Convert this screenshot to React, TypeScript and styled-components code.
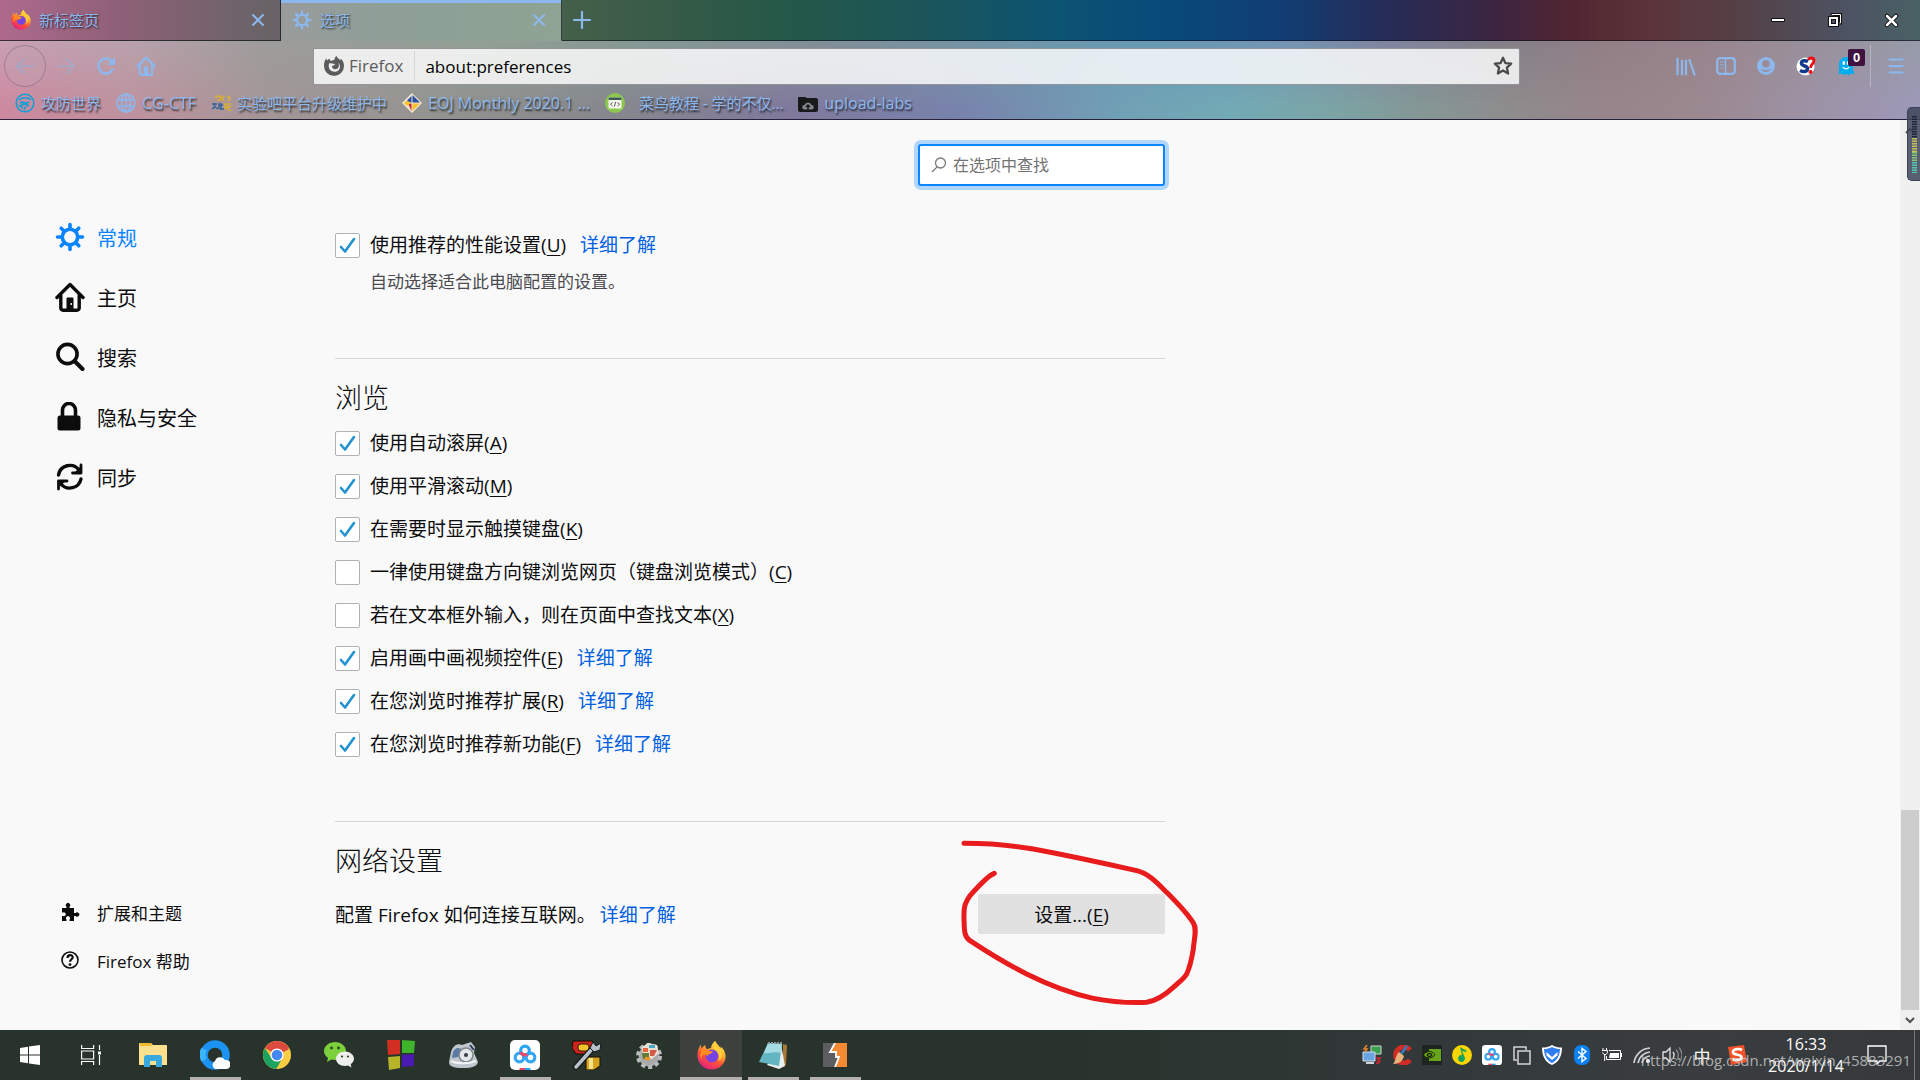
import React from 'react';
import styled, { createGlobalStyle, css } from 'styled-components';

const uiFont = '"Open Sans", "Noto Sans", "Noto Sans CJK SC", sans-serif';
const themeBlue = '#8cb8ee';

const GlobalStyle = createGlobalStyle`
  *, *::before, *::after { box-sizing: border-box; }
  body { margin: 0; background: #f9f9fa; font-family: ${uiFont}; color: #0c0c0d; }
  button, input { font: inherit; color: inherit; }
  button { border: 0; padding: 0; background: none; }
  svg { display: block; flex: none; }
  a { text-decoration: none; }
`;

const Screen = styled.div`
  display: flex;
  flex-direction: column;
  min-height: 100vh;
  position: relative;
  overflow: hidden;
`;

/* ---------- browser chrome ---------- */

const TabStrip = styled.div`
  display: flex;
  height: 41px;
  background: linear-gradient(90deg, #ae6a8e 0%, #8f6078 6%, #6c6468 13%, #55595a 20%, #46604a 29%, #335a47 36%, #245848 41%, #1b5559 48%, #0c5472 55%, #08497a 61%, #123d72 67%, #252d58 72%, #3d2540 78%, #522631 82%, #5b343a 86%, #544248 91%, #4d5262 96%, #496165 100%);
`;

const Tab = styled.div<{ $active?: boolean }>`
  display: flex;
  align-items: center;
  width: 281px;
  padding: 0 12px 0 11px;
  gap: 8px;
  font-size: 15px;
  color: ${themeBlue};
  text-shadow: 1px 1px 2px rgba(0, 0, 0, 0.75);
  border-right: 1px solid rgba(10, 20, 20, 0.7);
  border-bottom: 1px solid rgba(10, 20, 20, 0.7);
  ${p => p.$active && css`
    background: linear-gradient(90deg, #999b9b, #8d9f97 40%, #8fa393);
    border-bottom-color: transparent;
    box-shadow: inset 0 3px 0 ${themeBlue};
  `}
`;

const TabTitle = styled.span`
  flex: 1;
  line-height: 20px;
`;

const StripFill = styled.div`
  flex: 1;
  display: flex;
  justify-content: space-between;
  border-bottom: 1px solid rgba(10, 15, 30, 0.6);
`;

const IconButton = styled.button<{ $w?: number }>`
  display: grid;
  place-items: center;
  width: ${p => p.$w ?? 40}px;
  color: ${themeBlue};
`;

const WindowControls = styled.div`
  display: flex;
`;

const Toolbars = styled.div`
  position: relative;
  height: 79px;
  border-bottom: 1px solid #25213a;
  background: linear-gradient(90deg, #c9a0b4 0%, #b8a2ac 7%, #9d9c9b 14%, #93a095 25%, #879a94 33%, #828f97 43%, #6f97a9 53%, #6899b5 60%, #7494b4 67%, #8085a0 72%, #848089 78%, #917f86 83%, #98838b 88%, #99909a 94%, #979ca8 100%);
  &::before {
    content: '';
    position: absolute;
    inset: 0;
    background: linear-gradient(90deg, #cd899f 0%, #bd929e 7%, #a39696 14%, #949490 22%, #86878d 32%, #80799c 41%, #7883ac 50%, #719fb5 58%, #72aab5 64%, #7ba5a6 69%, #849795 74%, #8f8b8c 79%, #98858b 84%, #9b8991 89%, #9d93a8 95%, #9c98b8 100%);
    mask-image: linear-gradient(transparent, #000 85%);
  }
`;

const NavBar = styled.div`
  position: relative;
  display: flex;
  align-items: center;
  height: 50px;
  padding-left: 4px;
`;

const BackButton = styled.button`
  display: grid;
  place-items: center;
  width: 42px;
  height: 42px;
  border: 1px solid rgba(110, 80, 110, 0.4);
  border-radius: 50%;
  background: rgba(190, 165, 175, 0.25);
  color: #a9a4c4;
`;

const UrlBox = styled.div`
  display: flex;
  align-items: center;
  flex: 1;
  height: 37px;
  margin: 0 146px 0 147px;
  padding: 0 6px 0 10px;
  gap: 5px;
  border: 1px solid rgba(60, 60, 70, 0.5);
  border-radius: 2px;
  background: rgba(255, 255, 255, 0.82);
  font-size: 17px;
`;

const Identity = styled.span`
  padding-right: 11px;
  border-right: 1px solid #d5d5d7;
  color: #5b5b5d;
  line-height: 30px;
`;

const UrlInput = styled.input`
  flex: 1;
  min-width: 0;
  padding: 0 0 0 5px;
  border: 0;
  outline: 0;
  background: none;
  color: #000;
`;

const Extensions = styled.div`
  display: flex;
  align-items: center;
`;

const GhostWrap = styled.span`
  position: relative;
`;

const Badge = styled.span`
  position: absolute;
  left: 11px;
  top: -8px;
  width: 17px;
  height: 17px;
  border-radius: 2px;
  background: #3f1240;
  color: #fff;
  font: bold 13px/17px "Liberation Sans", sans-serif;
  text-align: center;
`;

const ToolSeparator = styled.i`
  width: 1px;
  height: 42px;
  margin-left: 4px;
  background: rgba(210, 210, 230, 0.5);
`;

const Bookmarks = styled.nav`
  position: relative;
  display: flex;
  align-items: center;
  gap: 15px;
  height: 24px;
  padding-left: 15px;
`;

const Bookmark = styled.a<{ $latin?: boolean }>`
  display: flex;
  align-items: center;
  gap: 6px;
  font-size: ${p => (p.$latin ? 16 : 15)}px;
  line-height: 24px;
  white-space: pre;
  color: ${themeBlue};
  text-shadow: 1px 2px 2px rgba(0, 0, 0, 0.75);
`;

/* ---------- preferences page ---------- */

const Page = styled.div`
  display: flex;
  flex: 1;
  background: #f9f9fa;
`;

const Sidebar = styled.aside`
  display: flex;
  flex-direction: column;
  justify-content: space-between;
  width: 335px;
  padding: 87px 0 46px 55px;
`;

const Category = styled.a<{ $selected?: boolean; $small?: boolean }>`
  display: flex;
  align-items: center;
  gap: 12px;
  height: ${p => (p.$small ? 48 : 60)}px;
  font-size: ${p => (p.$small ? 17 : 20)}px;
  color: ${p => (p.$selected ? '#0a84ff' : '#0c0c0d')};
`;

const CategoryIcon = styled.span`
  display: grid;
  place-items: center;
  width: 30px;
`;

const Main = styled.main`
  flex: 0 1 830px;
  padding-top: 24px;
  font-size: 19px;
`;

const SearchBox = styled.label`
  display: flex;
  align-items: center;
  gap: 6px;
  width: 247px;
  height: 42px;
  margin: 0 0 47px auto;
  padding: 0 11px;
  border: 2px solid #0a84ff;
  border-radius: 3px;
  background: #fff;
  box-shadow: 0 0 0 4px rgba(10, 132, 255, 0.3);
  font-size: 16px;
`;

const SearchInput = styled.input`
  flex: 1;
  min-width: 0;
  padding: 0;
  border: 0;
  outline: 0;
  background: none;
  &::placeholder { color: #737373; opacity: 1; }
`;

const Section = styled.section`
  & + & {
    margin-top: 64px;
    padding-top: 21px;
    border-top: 1px solid #d7d7db;
  }
`;

const Heading = styled.h2`
  margin: 0 0 15px;
  font-size: 27px;
  font-weight: 300;
  line-height: 36px;
`;

const OptionList = styled.div`
  display: flex;
  flex-direction: column;
  gap: 18px;
`;

const OptionRow = styled.div`
  display: flex;
  align-items: center;
  gap: 14px;
  height: 25px;
  line-height: 25px;
`;

const OptionLabel = styled.label`
  display: flex;
  align-items: center;
  gap: 10px;
  white-space: nowrap;
`;

const CheckBoxWrap = styled.span`
  display: grid;
  place-items: center;
  & > * { grid-area: 1 / 1; }
  & > svg { pointer-events: none; }
  & > input:not(:checked) + svg { visibility: hidden; }
`;

const CheckInput = styled.input`
  appearance: none;
  width: 25px;
  height: 25px;
  margin: 0;
  border: 1px solid #b1b1b1;
  border-radius: 2px;
  background: #fff;
`;

const Key = styled.span`
  text-decoration: underline;
  text-decoration-thickness: 1px;
  text-underline-offset: 3px;
`;

const LearnMore = styled.a`
  color: #0060df;
  white-space: nowrap;
`;

const Description = styled.p`
  margin: 12px 0 0 35px;
  font-size: 17px;
  line-height: 24px;
  color: #4a4a4f;
`;

const NetworkRow = styled.div`
  display: flex;
  align-items: center;
  gap: 4px;
`;

const ButtonWrap = styled.div`
  position: relative;
  margin-left: auto;
`;

const SettingsButton = styled.button`
  display: block;
  width: 187px;
  height: 40px;
  border-radius: 2px;
  background: #e1e1e2;
`;

const RedMark = styled.svg`
  position: absolute;
  left: -18px;
  top: -55px;
  pointer-events: none;
`;

const Scrollbar = styled.div`
  display: flex;
  flex-direction: column;
  width: 20px;
  margin-left: auto;
  background: #f0f0f0;
`;

const ScrollArrow = styled.button`
  display: grid;
  place-items: center;
  height: 20px;
  color: #505050;
`;

const ScrollTrack = styled.div`
  display: flex;
  flex: 1;
  align-items: flex-end;
  justify-content: center;
`;

const ScrollThumb = styled.div`
  width: 18px;
  height: 23%;
  background: #cdcdcd;
`;

const MeterWidget = styled.div`
  position: absolute;
  right: 0;
  top: 107px;
  display: flex;
  justify-content: flex-end;
  width: 13px;
  height: 74px;
  padding: 8px 3px 0 0;
  border: 1px solid #3d4156;
  border-right: 0;
  border-radius: 5px 0 0 5px;
  background: rgba(62, 68, 90, 0.85);
`;

/* ---------- taskbar ---------- */

const Taskbar = styled.footer`
  position: relative;
  display: flex;
  justify-content: space-between;
  height: 50px;
  background: linear-gradient(90deg, #28332c 0%, #28332c 55%, #33393a 75%, #3a3d40 90%, #36393b 100%);
`;

const Apps = styled.div`
  display: flex;
`;

const AppButton = styled.button<{ $state?: 'running' | 'active'; $w?: number }>`
  display: grid;
  place-items: center;
  width: ${p => p.$w ?? 62}px;
  border-top: 3px solid transparent;
  border-bottom: 3px solid transparent;
  ${p => p.$state === 'running' && css`
    background: linear-gradient(#b5b0b0, #b5b0b0) 50% 100% / 51px 3px no-repeat border-box;
  `}
  ${p => p.$state === 'active' && css`
    background: #3d423e;
    border-top-color: #3d423e;
    border-bottom-color: #b5b0b0;
  `}
`;

const Tray = styled.div`
  display: flex;
  align-items: center;
  color: #fff;
`;

const TrayIcon = styled.button<{ $w?: number }>`
  display: grid;
  place-items: center;
  width: ${p => p.$w ?? 30}px;
  height: 50px;
  font-size: 17px;
  color: #fff;
`;

const Clock = styled.div`
  width: 98px;
  font-size: 16px;
  line-height: 22px;
  text-align: center;
`;

const DesktopEdge = styled.i`
  width: 6px;
  height: 50px;
  margin-left: 15px;
  border-left: 1px solid #777;
`;

const Watermark = styled.span`
  position: absolute;
  right: 9px;
  bottom: 9px;
  font-size: 15px;
  line-height: 22px;
  color: rgba(205, 205, 205, 0.8);
  pointer-events: none;
`;

/* ---------- drawings ---------- */

const FirefoxLogo = ({ size, id }: { size: number; id: string }) => (
  <svg width={size} height={size} viewBox="0 0 32 32">
    <defs>
      <linearGradient id={id} x1="0.8" y1="0" x2="0.25" y2="1">
        <stop offset="0" stopColor="#fff44f" />
        <stop offset="0.35" stopColor="#ffb02e" />
        <stop offset="0.6" stopColor="#ff5634" />
        <stop offset="1" stopColor="#e01a86" />
      </linearGradient>
    </defs>
    <path fill={`url(#${id})`} d="M30.8 13C29.8 9.600 27.500 7.500 26 6.200c.2 1 .3 1.700.2 2.400C24.500 5 21 3.500 20.200 0c-3 1.700-4.500 5-4.700 7.600-1.500.1-3 .6-4.300 1.400C9.700 8.400 9 6.500 9.300 4.500 7.500 5.400 6 7 5.200 8.300 4.500 7.600 4.300 5.300 4.700 3.500 2.300 6 .6 10 .5 15.500.5 25 7.500 31.500 16 31.500S31.500 25 31.500 17c0-1.500-.2-2.800-.7-4z" />
    <circle cx="16.500" cy="16.500" r="7" fill="#7542e5" />
    <path fill="#ff8a1d" d="M5.500 9c3 0 5 .5 7 1.500 1.500.6 3 .5 5 1-.5 2-2.500 2.500-4 3-1 .6-2 1.500-2.200 3C11 15 9.500 14.500 8 15c-2 .7-3.500 3-3 6C3 17 3.500 12 5.500 9z" />
    <path fill="#ffcf3a" d="M20.200 0c.5 4 6 5.500 7.500 11.500 1 5-1 9-4.500 11 2-4 1.500-8-1-11-2-2.300-4.500-4-4.700-6.500.2-2 1.200-4 2.700-5z" opacity=".85" />
  </svg>
);

const Gear = ({ size }: { size: number }) => (
  <svg width={size} height={size} viewBox="0 0 30 30" fill="none" stroke="currentColor" strokeLinecap="round">
    <circle cx="15" cy="15" r="7.700" strokeWidth="3.600" />
    <g strokeWidth="3.600">
      <path d="M15 2.500V6M15 24v3.500M2.500 15H6M24 15h3.500M6.200 6.200l2.300 2.300M21.500 21.500l2.300 2.300M6.200 23.800l2.300-2.300M21.500 8.500l2.300-2.300" />
    </g>
  </svg>
);

const House = ({ size }: { size: number }) => (
  <svg width={size} height={size} viewBox="0 0 30 30" fill="none" stroke="currentColor" strokeLinecap="round" strokeLinejoin="round">
    <path d="M2 15.500 15 2.500l13 13" strokeWidth="3.400" />
    <path d="M5.800 13.500V26a2.200 2.200 0 0 0 2.200 2.200h14a2.200 2.200 0 0 0 2.200-2.200V13.500" strokeWidth="3.400" />
    <path d="M11.500 28V16.500a1 1 0 0 1 1-1h5a1 1 0 0 1 1 1V28z M15.500 21h1.400v2h-1.400z" fill="currentColor" fillRule="evenodd" stroke="none" />
  </svg>
);

const Close = () => (
  <svg width="14" height="14" viewBox="0 0 14 14" stroke="currentColor" strokeWidth="2" strokeLinecap="round"><path d="M2 2l10 10M12 2 2 12" /></svg>
);

const NetDisk = ({ size }: { size: number }) => (
  <svg width={size} height={size} viewBox="0 0 30 30">
    <rect width="30" height="30" rx="5" fill="#fff" />
    <g fill="none" strokeWidth="3.200">
      <circle cx="9.500" cy="17.500" r="4.300" stroke="#35a7f5" />
      <circle cx="20.500" cy="17.500" r="4.300" stroke="#35a7f5" />
      <circle cx="15" cy="10.500" r="4.300" stroke="#2aa4f4" />
      <path d="M10.700 12a4.300 4.300 0 0 0 6.500 2.200" stroke="#f2466a" />
    </g>
    <path d="M9.500 28h5.500v2H9.500z" fill="#f04460" /><path d="M15 28h5.500v2H15z" fill="#2aa4f4" />
  </svg>
);

const CheckMark = () => (
  <svg width="17" height="17" viewBox="0 0 17 17" fill="none" stroke="#2292d0" strokeWidth="2.600" strokeLinecap="round" strokeLinejoin="round"><path d="M2 10l4 4.500L15 2" /></svg>
);

const Check = ({ text, k, on, more }: { text: string; k: string; on?: boolean; more?: boolean }) => (
  <OptionRow>
    <OptionLabel>
      <CheckBoxWrap><CheckInput type="checkbox" defaultChecked={on} /><CheckMark /></CheckBoxWrap>
      <span>{text}(<Key>{k}</Key>)</span>
    </OptionLabel>
    {more && <LearnMore href="#">详细了解</LearnMore>}
  </OptionRow>
);

const options = [
  { text: '使用自动滚屏', k: 'A', on: true },
  { text: '使用平滑滚动', k: 'M', on: true },
  { text: '在需要时显示触摸键盘', k: 'K', on: true },
  { text: '一律使用键盘方向键浏览网页（键盘浏览模式）', k: 'C' },
  { text: '若在文本框外输入，则在页面中查找文本', k: 'X' },
  { text: '启用画中画视频控件', k: 'E', on: true, more: true },
  { text: '在您浏览时推荐扩展', k: 'R', on: true, more: true },
  { text: '在您浏览时推荐新功能', k: 'F', on: true, more: true },
];

const bookmarks: { title: string; latin?: boolean; icon: React.ReactNode }[] = [
  {
    title: '攻防世界',
    icon: <svg width="20" height="20" viewBox="0 0 20 20" fill="none" stroke="#129fd6" strokeWidth="1.600"><circle cx="10" cy="10" r="8.800" /><path d="M4 7c3-3 9-3 12 0M5 10c3-3 5 2 9-1M6 14c1-4 4-4 8-1M9 17l2-4M4 12l4 3" /></svg>,
  },
  {
    title: 'CG-CTF',
    latin: true,
    icon: <svg width="20" height="20" viewBox="0 0 20 20" fill="none" stroke={themeBlue} strokeWidth="1.500"><circle cx="10" cy="10" r="9" /><ellipse cx="10" cy="10" rx="4.500" ry="9" /><path d="M10 1v18M1.500 7h17M1.500 13h17" /></svg>,
  },
  {
    title: '实验吧平台升级维护中',
    icon: <svg width="20" height="20" viewBox="0 0 20 20" fill="none"><path d="M4 5c2-3 6-2 6 0s-3 2-3 3M13 3l-2 3 2 2M16 3l3 2-2 3" stroke="#d8ae35" strokeWidth="1.600" /><path d="M1 11h5M3.500 10v4M1 16l3-2 3 2M8 10v6M8 12h4M10 10v6M9 16h4" stroke="#34649b" strokeWidth="1.500" /><path d="M14 11h2v4h-2zM17 11h3v3h-3v3h3" stroke="#d8ae35" strokeWidth="1.400" /></svg>,
  },
  {
    title: 'EOJ Monthly 2020.1 ...',
    latin: true,
    icon: <svg width="20" height="20" viewBox="0 0 20 20"><path d="M10 0l10 10-10 10L0 10z" fill="#f2e6d2" /><path d="M10.500 2l7.500 7.500h-7.500z" fill="#2c4fa0" /><path d="M9.500 3v6.500H6.500L5 7.500z" fill="#2c4fa0" /><path d="M9.500 18v-7.500H6z" fill="#c1272d" /><path d="M2 10l3-2.500 4 2.500-4 3z" fill="#f8c22e" /><path d="M10.500 18v-7.500H18z" fill="#f8c22e" /></svg>,
  },
  {
    title: '  菜鸟教程 - 学的不仅...',
    icon: <svg width="20" height="20" viewBox="0 0 20 20"><circle cx="10" cy="10" r="10" fill="#8cc84b" /><rect x="3.500" y="4.500" width="13" height="11" fill="#f7f7f0" /><path d="M3.500 4.500h13v2.500h-13z" fill="#3c5a55" /><path d="M7.500 9.500 5.500 11.200l2 1.800M12.500 9.500l2 1.700-2 1.800M10.700 9l-1.400 4.500" fill="none" stroke="#555" /></svg>,
  },
  {
    title: 'upload-labs',
    latin: true,
    icon: <svg width="20" height="20" viewBox="0 0 20 20"><path d="M1 4h6l2 1h9a2 2 0 0 1 2 2v10a2 2 0 0 1-2 2H2a2 2 0 0 1-2-2V5a1 1 0 0 1 1-1z" fill="#17191b" /><path d="M6.500 16.500a2.300 2.300 0 0 1 0-4.600 3.700 3.700 0 0 1 7 0 2.300 2.300 0 0 1 0 4.600z" fill="#85878a" /><path d="M10 17v-4.500M8 14l2-2 2 2" stroke="#17191b" strokeWidth="1.500" fill="none" /></svg>,
  },
];

const Chrome = () => (
  <svg width="28" height="28" viewBox="0 0 28 28">
    <circle cx="14" cy="14" r="14" fill="#fccc44" />
    <path d="M14 14 1.900 7A14 14 0 0 1 26.100 7z" fill="#db4a3e" /><path d="M26.500 8H14v6z" fill="#db4a3e" />
    <path d="M14 14 8.500 17 1.900 7A14 14 0 0 0 13.200 28l6-10.500z" fill="#1da361" />
    <circle cx="14" cy="14" r="6.600" fill="#fff" /><circle cx="14" cy="14" r="5.300" fill="#4688f1" />
  </svg>
);

const apps: { name: string; w?: number; state?: 'running' | 'active'; icon: React.ReactNode }[] = [
  { name: '开始', w: 60, icon: <svg width="20" height="20" viewBox="0 0 20 20" fill="#fff"><path d="M0 3l8-1.200v7.700H0zM9 1.600 20 0v9.500H9zM0 10.500h8v7.700L0 17zM9 10.500h11V20L9 18.400z" /></svg> },
  { name: '任务视图', icon: <svg width="20" height="20" viewBox="0 0 20 20" fill="none" stroke="#fff" strokeWidth="1.200"><path d="M.6 0v3.500h12V0M.6 20v-3.500h12V20M.6 6h12v8H.6zM18.500 0v5M18.500 10v10" /><path d="M17 6.500h3v3h-3z" fill="#fff" stroke="none" /></svg> },
  { name: '资源管理器', icon: <svg width="28" height="24" viewBox="0 0 28 24"><path d="M0 1a1 1 0 0 1 1-1h11l2 2h13a1 1 0 0 1 1 1v19H0z" fill="#fbe08f" /><path d="M1 0h11l1 3H1z" fill="#f3b92d" /><path d="M5 23v-8a3 3 0 0 1 3-3h12a3 3 0 0 1 3 3v9h-6v-6h-6v6H5z" fill="#38a9de" /></svg> },
  { name: 'QQ浏览器', state: 'running', icon: <svg width="30" height="30" viewBox="0 0 30 30"><circle cx="15" cy="15" r="11" fill="none" stroke="#1c92f2" strokeWidth="7.500" /><path d="M4 9a12 12 0 0 0 0 11" stroke="#3bb6f8" strokeWidth="6" fill="none" /><path d="M15 29a4.500 4.500 0 0 1 0-8 5.500 5.500 0 0 1 10-1 4.500 4.500 0 0 1 2 9z" fill="#fff" /></svg> },
  { name: 'Chrome', icon: <Chrome /> },
  { name: '微信', icon: <svg width="30" height="26" viewBox="0 0 30 26"><path d="M11 0C5 0 0 4 0 9c0 3 1.500 5 4 6.800L3 20l4.500-2.400c1 .3 2.300.4 3.500.4 6 0 11-4 11-9S17 0 11 0z" fill="#7bd03c" /><path d="M21 9.500c-5 0-9 3.200-9 7.300s4 7.200 9 7.200c1 0 2-.1 3-.4l3.500 2-.8-3.400c2-1.300 3.300-3.200 3.300-5.400 0-4-4-7.300-9-7.300z" fill="#eee" /><g fill="#27471b"><circle cx="7.500" cy="6" r="1.400" /><circle cx="14.500" cy="6" r="1.400" /><circle cx="18" cy="14.500" r="1.100" /><circle cx="24" cy="14.500" r="1.100" /></g></svg> },
  { name: '工具箱', icon: <svg width="28" height="30" viewBox="0 0 28 30"><path d="M0 0h13v14L1 15z" fill="#d02f22" /><path d="M15 0l13 1-1 12H15z" fill="#3fb32b" /><path d="M1 17l12-1v12L2 30z" fill="#b8b42a" /><path d="M15 15l12-1v12l-12 1z" fill="#4a1bb0" /></svg> },
  { name: '看图', icon: <svg width="30" height="26" viewBox="0 0 30 26"><path d="M3 10C5 3 10 1 14 3l9-3 4 5-1 6 4 9c-1 4-5 6-15 6S1 24 1 20z" fill="#bfc6cc" /><path d="M5 10c2-5 7-5 9-2l-4 7-6 1z" fill="#5a7ba3" /><circle cx="18" cy="13" r="7" fill="#e4e7ea" stroke="#7c858e" strokeWidth="1.500" /><circle cx="18" cy="13" r="2" fill="#333b45" /><path d="M3 19c6 3 18 3 25 0" stroke="#f4f4f4" strokeWidth="2" fill="none" /><path d="M22 3l4 5" stroke="#273c5c" strokeWidth="2" /></svg> },
  { name: '百度网盘', state: 'running', icon: <NetDisk size={30} /> },
  { name: '维护', icon: <svg width="30" height="30" viewBox="0 0 30 30"><path d="M1 1h19l3 5-4 8H4L0 8z" fill="#c9251c" stroke="#1b0c08" /><rect x="6" y="4" width="11" height="7" rx="3" fill="#f4c52a" stroke="#3a1808" /><path d="M14 17h14v9l-6 4h-8z" fill="#d9a520" stroke="#1b0c08" /><path d="M17 18h4v11h-4z" fill="#f7e38e" /><path d="M4 27 21 8" stroke="#14181c" strokeWidth="6" strokeLinecap="round" /><path d="M4 27 21 8" stroke="#b6c1ca" strokeWidth="3.500" strokeLinecap="round" /><path d="M21 2l3 4 5-3-1 7-6 2-4-4z" fill="#b6c1ca" stroke="#14181c" /></svg> },
  { name: '组件', icon: <svg width="30" height="28" viewBox="0 0 30 28"><circle cx="15" cy="15" r="10.500" fill="#a7a9ab" /><circle cx="15" cy="15" r="11" fill="none" stroke="#b9bbbd" strokeWidth="4" strokeDasharray="4 3" /><path d="M8 6l6-4 9 2 2 8-7 6-9-1z" fill="#e9e2d2" /><path d="M9 7h5v4H9z" fill="#e8663a" /><path d="M15 4h6v3h-6z" fill="#4aa3c8" /><path d="M8 12h7v6H9z" fill="#637b38" /><path d="M16 9h7l-3 6h-4z" fill="#d65b44" /><path d="M11 16h5v3h-5z" fill="#f5921e" /></svg> },
  { name: 'Firefox', state: 'active', icon: <FirefoxLogo size={29} id="ffTask" /> },
  { name: '记事本', state: 'running', icon: <svg width="28" height="27" viewBox="0 0 28 27"><path d="M24 2l4 1-1 20-3 1z" fill="#a77b36" /><path d="M22 2l4 22-6 3-12-4z" fill="#e9eff0" /><path d="M9 1l14 1-3 22L0 20z" fill="#63b5c2" /><path d="M9 1l14 1-1 9C15 9 10 12 5 11z" fill="#a5dbe2" /><path d="M9 1h15" stroke="#8a9698" strokeWidth="2" strokeDasharray="2 1" /></svg> },
  { name: 'Burp Suite', state: 'running', icon: <svg width="24" height="24" viewBox="0 0 24 24"><path d="M0 0h24v24H0z" fill="#f58a32" /><path d="M0 0h12L7 9h6v5l3 1-4 9H0z" fill="#5d5c60" /><path d="M12 0 7 9h6v5h3l-4 10" fill="none" stroke="#fff" strokeWidth="1.800" /></svg> },
];

const tray: { name: string; icon: React.ReactNode }[] = [
  { name: '网络', icon: <svg width="20" height="20" viewBox="0 0 20 20"><path d="M9 1h10v8H9z" fill="#38a04b" stroke="#cdd6d0" /><path d="M1 7h12v9H1z" fill="#6aa5e2" stroke="#d5dfe9" /><path d="M4 18h8" stroke="#cfd5da" strokeWidth="2" /><path d="M5 0 2 4h3l-2 3" stroke="#e8872b" strokeWidth="1.500" fill="none" /><path d="M14 13h4l-2 2.500c3 0 2 3-2 2.500" stroke="#c92733" strokeWidth="1.700" fill="none" /></svg> },
  { name: 'CCleaner', icon: <svg width="20" height="20" viewBox="0 0 20 20"><path d="M18 5A8 8 0 1 0 18 15" fill="none" stroke="#cf2c25" strokeWidth="5" /><path d="M14 0l2 2-6 8-2-2z" fill="#3a77b7" /><path d="M7 7l5 4c-1 5-5 8-11 8 3-3 2-8 6-12z" fill="#e8b27a" /></svg> },
  { name: 'NVIDIA', icon: <svg width="20" height="20" viewBox="0 0 20 20"><path d="M0 0h20v20H0z" fill="#1e2420" /><path d="M7 4h12v12H7z" fill="#69a51c" /><path d="M1.500 10C4 6 9 5 13 9.500 11 14 4 14 1.500 10z" fill="#76b900" stroke="#16200e" /><path d="M5 10c1-2 4-2 5 0-1 2-4 2-5 0z" fill="none" stroke="#16200e" strokeWidth="1.300" /></svg> },
  { name: 'QQ音乐', icon: <svg width="20" height="20" viewBox="0 0 20 20"><circle cx="10" cy="10" r="10" fill="#fcd600" /><path d="M8 2l7 4-1 1-4-1 3 7a3.500 3.500 0 1 1-3-3z" fill="#17a35b" /></svg> },
  { name: '百度网盘', icon: <NetDisk size={20} /> },
  { name: '窗口', icon: <svg width="18" height="19" viewBox="0 0 18 19" fill="none" stroke="#d3d5d6" strokeWidth="1.500"><path d="M4 14H1V1h12v3" /><path d="M5 5h12v13H5z" /></svg> },
  { name: '电脑管家', icon: <svg width="20" height="20" viewBox="0 0 20 20"><path d="M10 0c3 2 6 2.500 10 2.500C20 11 17 17 10 20 3 17 0 11 0 2.500 4 2.500 7 2 10 0z" fill="#fff" /><path d="M10 2c3 1.500 5 2 8 2-.3 7-3 11.500-8 14-5-2.500-7.700-7-8-14 3 0 5-.5 8-2z" fill="#2d7df0" /><path d="M4.500 7 10 12l5.500-5v3.500L10 15l-5.500-4.500z" fill="#fff" /></svg> },
  { name: '蓝牙', icon: <svg width="16" height="20" viewBox="0 0 16 20"><rect width="16" height="20" rx="7" fill="#0a82f5" /><path d="M4 6.500l8 7-4 3v-13l4 3-8 7" fill="none" stroke="#fff" strokeWidth="1.400" /></svg> },
  { name: '电池', icon: <svg width="20" height="14" viewBox="0 0 20 14" fill="none" stroke="#fff"><path d="M7 2.500h11.500v9H4.500V8" /><path d="M8 5h9v5H7z" fill="#fff" stroke="none" /><path d="M19 5h1v4h-1z" fill="#fff" stroke="none" /><path d="M1 0v2M4.500 0v2M0 2.500h5.500v2l-1.500 2H2L.5 4.500M2.700 6v7" /></svg> },
  { name: '无线网络', icon: <svg width="18" height="18" viewBox="0 0 18 18" fill="none" stroke="#cfd1d2" strokeWidth="1.700"><path d="M1 17A17 17 0 0 1 17 2M5 17A13 13 0 0 1 17 6M9 17a9 9 0 0 1 8-7" /><circle cx="15" cy="15" r="2" fill="#fff" stroke="none" /></svg> },
  { name: '音量', icon: <svg width="20" height="18" viewBox="0 0 20 18" fill="none" stroke="#e5e5e5" strokeWidth="1.300"><path d="M1 6h3l4-4v14l-4-4H1z" /><path d="M11 6c1.500 2 1.500 4 0 6" /><path d="M14 3.500c3 3.500 3 7.500 0 11M17 1.500c4 4.500 4 10.500 0 15" opacity=".45" /></svg> },
  { name: '输入法', icon: <span>中</span> },
];

export default function App() {
  return (
    <Screen>
      <GlobalStyle />
      <header>
        <TabStrip>
          <Tab>
            <FirefoxLogo size={20} id="ffTab" />
            <TabTitle>新标签页</TabTitle>
            <IconButton $w={20} aria-label="关闭标签页"><Close /></IconButton>
          </Tab>
          <Tab $active>
            <Gear size={20} />
            <TabTitle>选项</TabTitle>
            <IconButton $w={20} aria-label="关闭标签页"><Close /></IconButton>
          </Tab>
          <StripFill>
            <IconButton aria-label="新建标签页">
              <svg width="18" height="18" viewBox="0 0 18 18" stroke="currentColor" strokeWidth="2.200" strokeLinecap="round"><path d="M9 1v16M1 9h16" /></svg>
            </IconButton>
            <WindowControls>
              <IconButton $w={57} aria-label="最小化">
                <svg width="14" height="4" viewBox="0 0 14 4"><path d="M.5.5h13v3H.5z" fill="#fff" stroke="#111" /></svg>
              </IconButton>
              <IconButton $w={57} aria-label="还原">
                <svg width="14" height="14" viewBox="0 0 14 14" fill="none"><path d="M4 3V1.500h8.500V10H11" stroke="#111" strokeWidth="3" /><path d="M4 2.500V1.500h8.500V10H11.500" stroke="#fff" /><path d="M2 5h7v7H2z" stroke="#111" strokeWidth="4" /><path d="M2 5h7v7H2z" stroke="#fff" strokeWidth="2" /></svg>
              </IconButton>
              <IconButton $w={57} aria-label="关闭">
                <svg width="15" height="15" viewBox="0 0 15 15" strokeLinecap="round"><path d="M3 3l9 9M12 3l-9 9" stroke="#111" strokeWidth="4.500" /><path d="M3 3l9 9M12 3l-9 9" stroke="#fff" strokeWidth="2.500" /></svg>
              </IconButton>
            </WindowControls>
          </StripFill>
        </TabStrip>
        <Toolbars>
          <NavBar>
            <BackButton aria-label="后退">
              <svg width="20" height="20" viewBox="0 0 20 20" fill="none" stroke="currentColor" strokeWidth="2.200" strokeLinecap="round" strokeLinejoin="round"><path d="M18 10H2M9 3l-7 7 7 7" /></svg>
            </BackButton>
            <IconButton aria-label="前进">
              <svg width="20" height="20" viewBox="0 0 20 20" fill="none" stroke="#aaa6c2" strokeWidth="2.200" strokeLinecap="round" strokeLinejoin="round"><path d="M2 10h16M11 3l7 7-7 7" /></svg>
            </IconButton>
            <IconButton aria-label="刷新">
              <svg width="20" height="20" viewBox="0 0 20 20" fill="none" stroke="currentColor" strokeWidth="2.500" strokeLinecap="round"><path d="M16.500 13.500A7.500 7.500 0 1 1 15.500 5l2 2" /><path d="M19 1v8h-8z" fill="currentColor" stroke="none" /></svg>
            </IconButton>
            <IconButton aria-label="主页"><House size={20} /></IconButton>
            <UrlBox>
              <svg width="20" height="20" viewBox="0 0 20 20"><path fill="#5b5b5d" fillRule="evenodd" d="M12.500 0c-1.500 1-2 2.500-2 4C9 4 8 4.500 7 5 6 4.500 5.500 3.500 5.500 2.500 4.500 3 3.700 3.700 3 4.500 2.500 4 2.300 3 2.500 2 1 3.800 0 6.500 0 10a10 10 0 0 0 20 0c0-3.500-1.500-6-3.500-7.500.3.800.3 1.500.2 2C15.500 3 13 2 12.500 0zM5 7.500c2-.5 3 .3 6 .5-.5 1.500-2 1.500-3 2-.5 3 3 4 5.500 2.500 1.500-1 2-4 .5-6 2.500 2 2.500 5 1 7.200-2 2.600-6.500 2.700-8.800.3C4.500 12.200 4.500 9.500 5 7.500z" /></svg>
              <Identity>Firefox</Identity>
              <UrlInput aria-label="地址栏" defaultValue="about:preferences" />
              <IconButton $w={20} aria-label="收藏">
                <svg width="20" height="20" viewBox="0 0 20 20" fill="none" stroke="#4b4b4e" strokeWidth="2.300" strokeLinejoin="round"><path d="M10 1.800l2.400 5.300 5.800.6-4.300 3.900 1.200 5.900L10 14.500l-5.100 3 1.200-5.900-4.300-3.900 5.800-.6z" /></svg>
              </IconButton>
            </UrlBox>
            <Extensions>
              <IconButton aria-label="书库">
                <svg width="20" height="19" viewBox="0 0 20 19" fill="none" stroke="currentColor" strokeWidth="2.200" strokeLinecap="round"><path d="M1.500 1.500v16M6 3.500v14M10 3.500v14M13.500 3l5 14.500" /></svg>
              </IconButton>
              <IconButton aria-label="侧栏">
                <svg width="20" height="18" viewBox="0 0 20 18" fill="none" stroke="currentColor" strokeWidth="2.200"><rect x="1.200" y="1.200" width="17.600" height="15.600" rx="3" /><path d="M9.500 1.500v15" strokeWidth="1.500" /><path d="M4 5h3.500M4 8h3.500M4.500 11h3" strokeWidth="1.200" /></svg>
              </IconButton>
              <IconButton aria-label="账户">
                <svg width="18" height="18" viewBox="0 0 18 18"><path fill="currentColor" fillRule="evenodd" d="M9 0a9 9 0 1 0 0 18A9 9 0 0 0 9 0zm0 3a3.800 3.800 0 1 1 0 7.600A3.800 3.800 0 0 1 9 3zm-5 8.500c2 2 8 2 10 0-.8 2.400-2.700 3.500-5 3.500s-4.200-1.100-5-3.500z" /></svg>
              </IconButton>
              <IconButton aria-label="扩展">
                <svg width="20" height="20" viewBox="0 0 20 20" fill="none"><circle cx="9.500" cy="10.500" r="9" fill="#fff" /><path d="M12 5.500C9 4 5 4.500 5.500 7.500s6 2 6 5-3.500 4-7.500 2" stroke="#113a8c" strokeWidth="3.500" /><path d="M12.500 4C13 1.500 18 1 18 4.500S14.500 8 14.500 12" stroke="#ee1016" strokeWidth="2.800" /><circle cx="14.500" cy="16" r="2" fill="#ee1016" /></svg>
              </IconButton>
              <IconButton aria-label="Ghostery">
                <GhostWrap>
                  <svg width="18" height="18" viewBox="0 0 18 18"><path d="M2 16V7a7 7 0 0 1 14 0v6l1.500 4-3-.5L12 18l-2.500-1L7 18l-2.500-1.500-4 .5z" fill="#00aef0" /><g fill="#fff"><ellipse cx="6.800" cy="6" rx="1.300" ry="2" /><ellipse cx="11" cy="6" rx="1.300" ry="2" /></g><path d="M6 10c1.500 2.500 4.500 2.500 6 0" fill="none" stroke="#fff" strokeWidth="1.400" /></svg>
                  <Badge>0</Badge>
                </GhostWrap>
              </IconButton>
              <ToolSeparator />
              <IconButton $w={49} aria-label="菜单">
                <svg width="16" height="16" viewBox="0 0 16 16" stroke="currentColor" strokeWidth="2.200" strokeLinecap="round"><path d="M1.500 1.500h13M1.500 8h13M1.500 14.500h13" /></svg>
              </IconButton>
            </Extensions>
          </NavBar>
          <Bookmarks>
            {bookmarks.map(b => <Bookmark key={b.title} href="#" $latin={b.latin}>{b.icon}{b.title}</Bookmark>)}
          </Bookmarks>
        </Toolbars>
      </header>

      <Page>
        <Sidebar>
          <nav>
            <Category href="#" $selected><CategoryIcon><Gear size={30} /></CategoryIcon>常规</Category>
            <Category href="#"><CategoryIcon><House size={30} /></CategoryIcon>主页</Category>
            <Category href="#">
              <CategoryIcon><svg width="30" height="30" viewBox="0 0 30 30" fill="none" stroke="currentColor" strokeLinecap="round"><circle cx="12.500" cy="12" r="9.600" strokeWidth="3.600" /><path d="M19.500 19l8 8" strokeWidth="4" /></svg></CategoryIcon>搜索
            </Category>
            <Category href="#">
              <CategoryIcon><svg width="30" height="30" viewBox="0 0 30 30"><path d="M7.500 14V8a6.500 6.500 0 0 1 13 0v6" fill="none" stroke="currentColor" strokeWidth="3.600" /><rect x="2.500" y="13.500" width="23" height="15" rx="2.500" fill="currentColor" /></svg></CategoryIcon>隐私与安全
            </Category>
            <Category href="#">
              <CategoryIcon><svg width="30" height="30" viewBox="0 0 30 30" fill="none" stroke="currentColor" strokeWidth="3.400" strokeLinecap="round"><path d="M3.500 13A11.500 11.500 0 0 1 24 8M26 17A11.500 11.500 0 0 1 6 22" /><path d="M26 3v8h-8.500M3.500 27v-8H12" strokeLinejoin="round" strokeWidth="2.800" /><path d="M26 4v7h-7zM3.500 26v-7h7z" fill="currentColor" stroke="none" /></svg></CategoryIcon>同步
            </Category>
          </nav>
          <nav>
            <Category href="#" $small>
              <CategoryIcon><svg width="20" height="20" viewBox="0 0 20 20" fill="currentColor"><path d="M2 6h4.500V4.800A2.200 2.200 0 1 1 9.500 4.800V6H14v5h1.500a2.200 2.200 0 1 1 0 3H14v5H9.500v-1.500a2 2 0 1 0-3 0V19H2v-5h1.200a1.900 1.900 0 1 0 0-3.500H2z" /></svg></CategoryIcon>扩展和主题
            </Category>
            <Category href="#" $small>
              <CategoryIcon><svg width="18" height="18" viewBox="0 0 18 18" fill="none" stroke="currentColor"><circle cx="9" cy="9" r="8" strokeWidth="1.600" /><path d="M6.500 7c0-4 5.500-3.500 5.200-.5C11.500 8.200 9 8.500 9 10.800" strokeWidth="2.200" /><circle cx="9" cy="13.600" r="1.400" fill="currentColor" stroke="none" /></svg></CategoryIcon>Firefox 帮助
            </Category>
          </nav>
        </Sidebar>

        <Main>
          <SearchBox>
            <svg width="16" height="16" viewBox="0 0 16 16" fill="none" stroke="#7a7a7a" strokeWidth="1.300"><circle cx="9.500" cy="6" r="5" /><path d="M6 10l-5 5" /></svg>
            <SearchInput aria-label="在选项中查找" placeholder="在选项中查找" />
          </SearchBox>
          <Section>
            <Check text="使用推荐的性能设置" k="U" on more />
            <Description>自动选择适合此电脑配置的设置。</Description>
          </Section>
          <Section>
            <Heading>浏览</Heading>
            <OptionList>
              {options.map(o => <Check key={o.k} {...o} />)}
            </OptionList>
          </Section>
          <Section>
            <Heading>网络设置</Heading>
            <NetworkRow>
              <span>配置 Firefox 如何连接互联网。</span>
              <LearnMore href="#">详细了解</LearnMore>
              <ButtonWrap>
                <SettingsButton>设置...(<Key>E</Key>)</SettingsButton>
                <RedMark width="238" height="167" viewBox="180 60 714 501" fill="none" stroke="#e81c1c" strokeWidth="15" strokeLinecap="round">
                  <path d="M192 73C260 73 330 78 400 90C480 105 600 130 710 155C745 163 770 190 800 220C830 250 860 280 880 312C892 330 882 360 880 390C875 420 872 440 860 465C850 482 830 495 820 505C795 528 770 545 740 550C690 552 640 550 580 538C520 525 440 495 380 465C320 435 260 398 210 365C192 352 193 335 192 300C191 265 193 255 210 230C230 207 265 170 283 163" />
                </RedMark>
              </ButtonWrap>
            </NetworkRow>
          </Section>
        </Main>

        <Scrollbar>
          <ScrollArrow aria-label="向上滚动"><svg width="10" height="7" viewBox="0 0 10 7" fill="none" stroke="currentColor" strokeWidth="2"><path d="M1 6l4-4 4 4" /></svg></ScrollArrow>
          <ScrollTrack><ScrollThumb /></ScrollTrack>
          <ScrollArrow aria-label="向下滚动"><svg width="10" height="7" viewBox="0 0 10 7" fill="none" stroke="currentColor" strokeWidth="2"><path d="M1 1l4 4 4-4" /></svg></ScrollArrow>
        </Scrollbar>
      </Page>

      <MeterWidget>
        <svg width="5" height="57" viewBox="0 0 5 57" fill="none" strokeWidth="5" strokeDasharray="1.500 1">
          <path d="M2.500 0v22" stroke="#23263a" /><path d="M2.500 22v14" stroke="#c8c25c" /><path d="M2.500 36v10" stroke="#84c978" /><path d="M2.500 46v11" stroke="#56c9b0" />
        </svg>
      </MeterWidget>

      <Taskbar>
        <Apps>
          {apps.map(a => <AppButton key={a.name} aria-label={a.name} $w={a.w} $state={a.state}>{a.icon}</AppButton>)}
        </Apps>
        <Tray>
          {tray.map(t => <TrayIcon key={t.name} aria-label={t.name}>{t.icon}</TrayIcon>)}
          <TrayIcon $w={40} aria-label="搜狗输入法">
            <svg width="20" height="20" viewBox="0 0 20 20"><path d="M1 2l16-2 3 17-16 3z" fill="#f0532a" /><path d="M15 5C11 3 5 4.500 6 7.500s8 1.500 8.500 4.500-5 4-9 2" fill="none" stroke="#fff" strokeWidth="2.600" /></svg>
          </TrayIcon>
          <Clock>16:33<br />2020/1/14</Clock>
          <TrayIcon $w={44} aria-label="通知">
            <svg width="20" height="20" viewBox="0 0 20 20" fill="none" stroke="#fff" strokeWidth="1.300"><path d="M1 1h18v15h-6l-3 3v-3H1z" /></svg>
          </TrayIcon>
          <DesktopEdge />
        </Tray>
        <Watermark>https://blog.csdn.net/weixin_45883291</Watermark>
      </Taskbar>
    </Screen>
  );
}
